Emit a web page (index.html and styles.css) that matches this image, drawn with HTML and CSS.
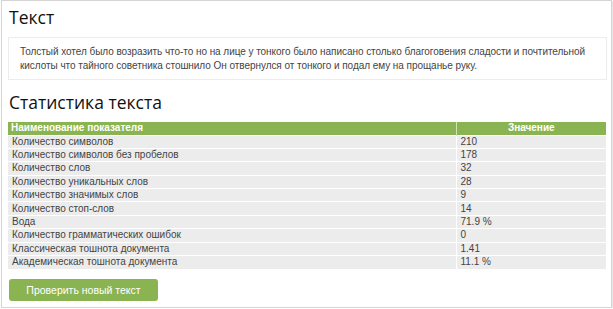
FILE: index.html
```html
<!DOCTYPE html>
<html>
<head>
    <meta charset="UTF-8">
    <title>Статистика текста</title>
    <link rel="stylesheet" href="styles.css">
</head>
<body>
    <div class="panel">
        <h2>Текст</h2>
        <div class="text-box">
            Толстый хотел было возразить что-то но на лице у тонкого было написано столько благоговения сладости и почтительной
            кислоты что тайного советника стошнило Он отвернулся от тонкого и подал ему на прощанье руку.
        </div>

        <h2>Статистика текста</h2>
        <table class="stats">
            <thead>
                <tr>
                    <th class="name-col">Наименование показателя</th>
                    <th class="value-col">Значение</th>
                </tr>
            </thead>
            <tbody>
                <tr><td>Количество символов</td><td>210</td></tr>
                <tr><td>Количество символов без пробелов</td><td>178</td></tr>
                <tr><td>Количество слов</td><td>32</td></tr>
                <tr><td>Количество уникальных слов</td><td>28</td></tr>
                <tr><td>Количество значимых слов</td><td>9</td></tr>
                <tr><td>Количество стоп-слов</td><td>14</td></tr>
                <tr><td>Вода</td><td>71.9 %</td></tr>
                <tr><td>Количество грамматических ошибок</td><td>0</td></tr>
                <tr><td>Классическая тошнота документа</td><td>1.41</td></tr>
                <tr><td>Академическая тошнота документа</td><td>11.1 %</td></tr>
            </tbody>
        </table>

        <button class="check-button">Проверить новый текст</button>
    </div>
</body>
</html>
```

FILE: styles.css
```css
* {
    box-sizing: border-box;
    margin: 0;
    padding: 0;
}

body {
    font-family: "Liberation Sans", Arial, sans-serif;
    font-size: 10px;
    color: #333;
    background: #fff;
}

.panel {
    width: 611px;
    height: 308px;
    margin-left: 1px;
    border: 1px solid #d4d4d4;
    padding: 3px 4px 0 6px;
    box-shadow: 1px 1px 1px #e6e6e6;
}

h2 {
    font-family: "Open Sans", "Noto Sans", sans-serif;
    font-weight: normal;
    font-size: 17.5px;
    line-height: 26px;
    color: #111;
    margin-left: 1px;
}

.text-box {
    margin-top: 7px;
    margin-bottom: 9px;
    border: 1px solid #ececec;
    padding: 7px 10px 6px 11px;
    line-height: 14px;
    letter-spacing: -0.05px;
    color: #444;
}

.stats {
    width: 598px;
    border-collapse: collapse;
    margin-top: 7px;
    margin-bottom: 10px;
}

.stats th {
    background: #8ab451;
    color: #fff;
    font-weight: bold;
    height: 13px;
    line-height: 12px;
    padding: 0 3px;
    border-right: 1px solid #cfe3b4;
}

.stats th.name-col {
    text-align: left;
    width: 448px;
}

.stats th.value-col {
    text-align: center;
    border-right: none;
}

.stats td {
    background: #ececec;
    height: 13.4px;
    line-height: 12px;
    padding: 0 4px;
    border-top: 1px solid #fff;
    color: #444;
}

.stats td + td {
    border-left: 1px solid #fff;
}

.check-button {
    display: block;
    width: 149px;
    height: 22px;
    margin-left: 1px;
    background: #8ab451;
    color: #fff;
    border: none;
    border-radius: 3px;
    font-family: "Liberation Sans", Arial, sans-serif;
    font-size: 10.5px;
    cursor: pointer;
}
```
